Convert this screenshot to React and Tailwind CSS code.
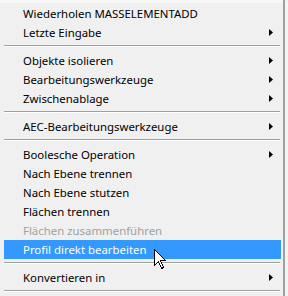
import React from "react";

const items = [
  { label: "Wiederholen MASSELEMENTADD" },
  { label: "Letzte Eingabe", sub: true },
  { sep: true },
  { label: "Objekte isolieren", sub: true },
  { label: "Bearbeitungswerkzeuge", sub: true },
  { label: "Zwischenablage", sub: true },
  { sep: true },
  { label: "AEC-Bearbeitungswerkzeuge", sub: true },
  { sep: true },
  { label: "Boolesche Operation", sub: true },
  { label: "Nach Ebene trennen" },
  { label: "Nach Ebene stutzen" },
  { label: "Flächen trennen" },
  { label: "Flächen zusammenführen", disabled: true },
  { label: "Profil direkt bearbeiten", active: true },
  { sep: true },
  { label: "Konvertieren in", sub: true },
  { sep: true },
];

const Arrow = () => (
  <svg width="4" height="7" viewBox="0 0 4 7" className="block">
    <path d="M0 0 L4 3.5 L0 7 Z" fill="#000" />
  </svg>
);

const Cursor = () => (
  <svg
    width="13"
    height="21"
    viewBox="0 0 13 21"
    className="absolute left-[154px] top-[249px]"
    shapeRendering="crispEdges"
  >
    <path
      d="M0.5 0.5 L0.5 16.5 L4.5 12.5 L7.5 19.5 L9.5 18.5 L6.5 11.5 L11.5 11.5 Z"
      fill="#fff"
      stroke="#000"
      strokeWidth="1"
    />
  </svg>
);

export default function App() {
  return (
    <div
      className="relative w-[288px] h-[296px] overflow-hidden bg-[#f0f0f0] text-[11.4px] text-black"
      style={{ fontFamily: '"Noto Sans", "Liberation Sans", sans-serif' }}
    >
      <div className="flex h-full">
        <div className="w-[283px] flex flex-col">
          {/* top strip */}
          <div className="h-[6px] border-t-[3px] border-[#f7f7f7]" />
          {items.map((it, i) =>
            it.sep ? (
              <div key={i} className="h-[9px] shrink-0 pt-[3px] pl-[4px] pr-[3px]">
                <div className="h-px bg-[#a0a0a0]" />
                <div className="h-px bg-white" />
              </div>
            ) : (
              <div
                key={i}
                className={`h-[19px] shrink-0 flex items-center justify-between ml-[4px] mr-[2px] pl-[19px] pr-[8px] ${
                  it.active ? "bg-[#3399ff] text-white" : ""
                } ${it.disabled ? "text-[#a0a0a0]" : ""}`}
              >
                <span className="leading-none whitespace-nowrap">{it.label}</span>
                {it.sub && <Arrow />}
              </div>
            )
          )}
        </div>
        <div className="w-[2px] bg-[#a0a0a0]" />
        <div className="flex-1 bg-[#f4f4f4]" />
      </div>
      <Cursor />
    </div>
  );
}
